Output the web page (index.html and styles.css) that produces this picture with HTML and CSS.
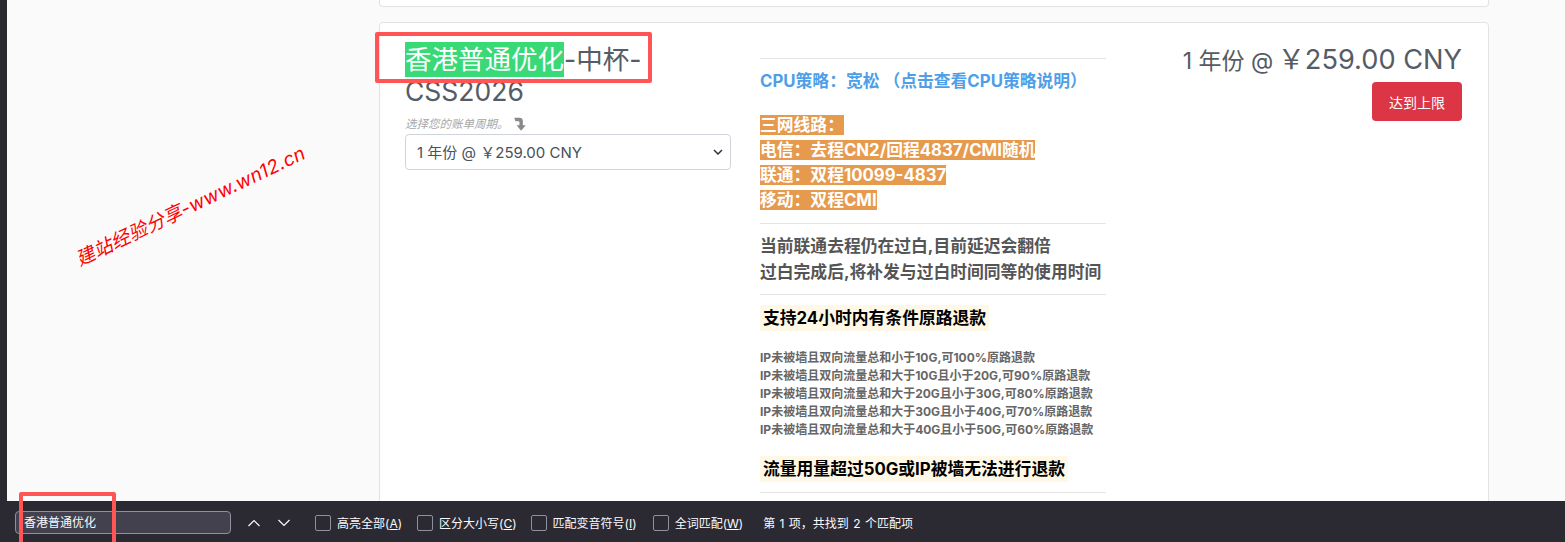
FILE: index.html
```html
<!DOCTYPE html>
<html lang="zh-CN">
<head>
<meta charset="utf-8">
<title>香港普通优化</title>
<link rel="stylesheet" href="styles.css">
</head>
<body>
<div class="page">
  <div class="strip"></div>
  <main class="main">
    <div class="card-stub"></div>
    <section class="card">
      <div class="col-left">
        <h3 class="title"><span class="match">香港普通优化</span>-中杯-CSS2026</h3>
        <div class="hint">选择您的账单周期。
          <svg class="hint-icon" width="16" height="16" viewBox="0 0 14 14"><path d="M2 1.500h4.500c2 0 3 1 3 3V8H12L8 13 4 8h2.500V5.500c0-.7-.3-1-1-1H3z" fill="#8a8a8a"/></svg>
        </div>
        <select class="cycle"><option>1 年份 @ ￥259.00 CNY</option></select>
      </div>
      <div class="col-mid">
        <hr class="rule">
        <p class="cpu">CPU策略：宽松 （点击查看CPU策略说明）</p>
        <div class="routes">
          <div><span class="mark">三网线路：</span></div>
          <div><span class="mark">电信：去程CN2/回程4837/CMI随机</span></div>
          <div><span class="mark">联通：双程10099-4837</span></div>
          <div><span class="mark">移动：双程CMI</span></div>
        </div>
        <hr class="rule rule-a">
        <p class="notice">当前联通去程仍在过白,目前延迟会翻倍<br>过白完成后,将补发与过白时间同等的使用时间</p>
        <hr class="rule rule-b">
        <div class="head-wrap"><span class="head">支持24小时内有条件原路退款</span></div>
        <div class="refunds">
          <div>IP未被墙且双向流量总和小于10G,可100%原路退款</div>
          <div>IP未被墙且双向流量总和大于10G且小于20G,可90%原路退款</div>
          <div>IP未被墙且双向流量总和大于20G且小于30G,可80%原路退款</div>
          <div>IP未被墙且双向流量总和大于30G且小于40G,可70%原路退款</div>
          <div>IP未被墙且双向流量总和大于40G且小于50G,可60%原路退款</div>
        </div>
        <div class="head-wrap head-wrap-b"><span class="head">流量用量超过50G或IP被墙无法进行退款</span></div>
        <hr class="rule rule-c">
      </div>
      <div class="col-right">
        <div class="price"><span class="period">1 年份 @</span> <span class="amount">￥259.00 CNY</span></div>
        <button class="limit" type="button">达到上限</button>
      </div>
    </section>
  </main>
</div>

<div class="findbar">
  <div class="find-input">香港普通优化</div>
  <div class="nav">
    <svg width="14" height="8" viewBox="0 0 14 8"><path d="M1.500 7 7 1.500 12.500 7" fill="none" stroke="#fbfbfe" stroke-width="1.200"/></svg>
    <svg width="14" height="8" viewBox="0 0 14 8"><path d="M1.500 1 7 6.500 12.500 1" fill="none" stroke="#fbfbfe" stroke-width="1.200"/></svg>
  </div>
  <label class="opt opt-a"><span class="box"></span><span>高亮全部(<u>A</u>)</span></label>
  <label class="opt opt-b"><span class="box"></span><span>区分大小写(<u>C</u>)</span></label>
  <label class="opt"><span class="box"></span><span>匹配变音符号(<u>I</u>)</span></label>
  <label class="opt"><span class="box"></span><span>全词匹配(<u>W</u>)</span></label>
  <span class="status">第 1 项，共找到 2 个匹配项</span>
</div>

<div class="watermark">建站经验分享-www.wn12.cn</div>
<div class="callout callout-title"></div>
<div class="callout callout-find"></div>
</body>
</html>
```
FILE: styles.css
```css
* { box-sizing: border-box; }
html, body { margin: 0; height: 542px; overflow: hidden; }
body {
  background: #fafafa;
  font-family: Inter, "Noto Sans CJK SC", sans-serif;
  color: #555;
  position: relative;
}
.page { display: flex; height: 542px; overflow: hidden; }
.strip { width: 7px; flex: none; background: #2b2a33; }
.main { flex: 1; padding: 0 76px 0 372px; }
.card-stub {
  height: 7px;
  background: #fff;
  border: 1px solid #e3e3e3;
  border-top: 0;
  border-radius: 0 0 4px 4px;
}
.card {
  margin-top: 15px;
  height: 600px;
  background: #fff;
  border: 1px solid #e3e3e3;
  border-radius: 4px;
  padding: 17px 26px 0 25px;
  display: grid;
  grid-template-columns: 326px 346px 1fr;
  column-gap: 29px;
}
.title {
  margin: 0;
  font-size: 26.500px;
  line-height: 31px;
  font-weight: 400;
  color: #555c65;
  padding-top: 3px;
}
.match {
  background: #38d976;
  color: #fff;
  display: inline-block;
  line-height: 35px;
  height: 35px;
  margin-top: -1px;
  margin-bottom: -1px;
}
.hint {
  margin-top: 9px;
  font-size: 11.500px;
  line-height: 16px;
  font-style: italic;
  color: #a8a8a8;
  display: flex;
  align-items: center;
  gap: 3px;
}
.hint-icon { flex: none; }
.cycle {
  appearance: none;
  margin-top: 2px;
  width: 326px;
  height: 36px;
  padding: 0 11px;
  background: #fff url("data:image/svg+xml,%3Csvg xmlns='http://www.w3.org/2000/svg' width='10' height='6' viewBox='0 0 10 6'%3E%3Cpath d='M1 1l4 4 4-4' fill='none' stroke='%23333' stroke-width='1.500'/%3E%3C/svg%3E") no-repeat right 7px center;
  border: 1px solid #ced4da;
  border-radius: 4px;
  font: 15px Inter, "Noto Sans CJK SC", sans-serif;
  color: #495057;
}
.col-mid { padding-top: 18px; }
.rule { margin: 0; border: 0; border-top: 1px solid #e4e4e4; }
.cpu {
  margin: 11px 0 0;
  font-size: 16.800px;
  line-height: 22px;
  font-weight: 700;
  color: #4f9fe8;
  white-space: nowrap;
}
.routes {
  margin-top: 21px;
  font-size: 16.800px;
  line-height: 25px;
  font-weight: 700;
  color: #fff;
}
.mark {
  background: #e69a4e;
  display: inline-block;
  height: 20px;
  line-height: 20px;
}
.routes div { height: 25px; }
.rule-a { margin-top: 10px; }
.notice {
  margin: 9px 0 0;
  font-size: 16.800px;
  line-height: 26px;
  font-weight: 700;
  color: #555;
  white-space: nowrap;
}
.rule-b { margin-top: 9px; }
.head-wrap { margin-top: 10px; height: 27px; }
.head-wrap-b { margin-top: 17px; height: 26px; }
.head {
  display: inline-block;
  background: #fff8e6;
  color: #000;
  font-size: 16.800px;
  line-height: 26px;
  font-weight: 700;
  padding: 0 3px;
  white-space: nowrap;
}
.refunds {
  margin-top: 17px;
  font-size: 12px;
  line-height: 18px;
  font-weight: 700;
  color: #666;
  white-space: nowrap;
}
.rule-c { margin-top: 10px; }
.col-right { text-align: right; }
.price { color: #555c65; white-space: nowrap; line-height: 40px; }
.period { font-size: 23px; }
.amount { font-size: 27.200px; }
.limit {
  margin-top: -1px;
  width: 90px;
  height: 39px;
  background: #dc3545;
  color: #fff;
  border: 0;
  border-radius: 4px;
  font: 14px Inter, "Noto Sans CJK SC", sans-serif;
}
.findbar {
  position: absolute;
  left: 7px;
  right: 0;
  bottom: 0;
  height: 41px;
  background: #2b2a33;
  color: #fbfbfe;
  font-size: 12px;
  display: flex;
  align-items: center;
  padding: 2px 0 0 8px;
  white-space: nowrap;
}
.find-input {
  width: 216px;
  height: 23px;
  background: #42414d;
  border: 1px solid #8f8f9d;
  border-radius: 4px;
  padding-left: 8px;
  line-height: 21px;
}
.nav { display: flex; gap: 16px; margin-left: 16px; margin-right: 24px; }
.opt { display: flex; align-items: center; gap: 6px; margin-right: 16px; }
.opt-a { margin-right: 15px; }
.opt-b { margin-right: 14px; }
.box {
  width: 16px;
  height: 16px;
  border: 1px solid #8f8f9d;
  border-radius: 2px;
}
.status { margin-left: 4px; word-spacing: 1px; }
.watermark {
  position: absolute;
  left: 65px;
  top: 195px;
  width: 250px;
  color: #f00;
  font-size: 19px;
  letter-spacing: .3px;
  line-height: 24px;
  font-style: italic;
  white-space: nowrap;
  transform: rotate(-25.500deg);
  text-align: center;
}
.callout {
  position: absolute;
  border: 4px solid #ff5555;
  border-radius: 2px;
}
.callout-title { left: 375px; top: 32px; width: 277px; height: 51px; }
.callout-find { left: 19px; top: 492px; width: 97px; height: 60px; }
```
